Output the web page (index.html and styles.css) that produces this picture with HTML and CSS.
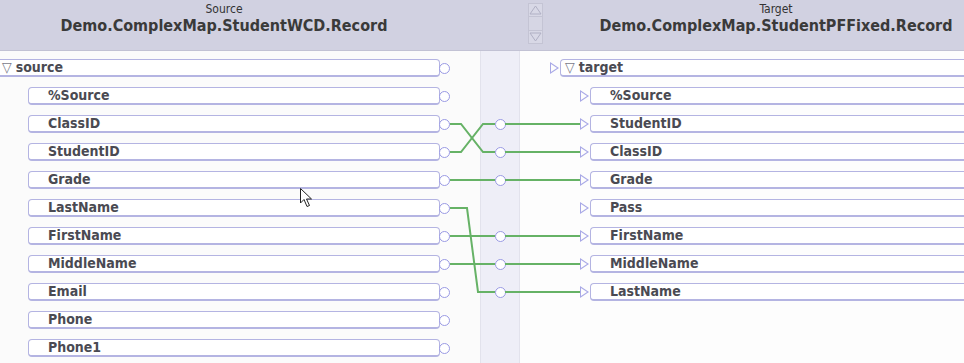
FILE: index.html
```html
<!DOCTYPE html>
<html lang="en">
<head>
    <meta charset="UTF-8">
    <title>Data Transformation Map</title>
    <link rel="stylesheet" href="styles.css">
</head>
<body>
    <div class="header">
        <div class="head-col head-source">
            <div class="head-label">Source</div>
            <div class="head-title">Demo.ComplexMap.StudentWCD.Record</div>
        </div>
        <div class="scroller">
            <svg width="15" height="41" viewBox="0 0 15 41">
                <rect x="0.5" y="13.5" width="14" height="14" fill="#d6d6e4" stroke="#c4c4d4"/>
                <rect x="0.5" y="0.5" width="14" height="13" fill="#d8d8e6" stroke="#c4c4d4"/>
                <rect x="0.5" y="27.5" width="14" height="13" fill="#d8d8e6" stroke="#c4c4d4"/>
                <polygon points="2,11 7.5,3 13,11" fill="none" stroke="#b0b0c4"/>
                <polygon points="2,30 7.5,38 13,30" fill="none" stroke="#b0b0c4"/>
            </svg>
        </div>
        <div class="head-col head-target">
            <div class="head-label">Target</div>
            <div class="head-title">Demo.ComplexMap.StudentPFFixed.Record</div>
        </div>
    </div>

    <div class="map">
        <!-- source tree -->
        <div class="pane pane-source">
            <div class="row"><div class="box root"><span class="twisty">&#9661;</span>source</div><span class="port"></span></div>
            <div class="row"><div class="box child">%Source</div><span class="port"></span></div>
            <div class="row"><div class="box child">ClassID</div><span class="port"></span></div>
            <div class="row"><div class="box child">StudentID</div><span class="port"></span></div>
            <div class="row"><div class="box child">Grade</div><span class="port"></span></div>
            <div class="row"><div class="box child">LastName</div><span class="port"></span></div>
            <div class="row"><div class="box child">FirstName</div><span class="port"></span></div>
            <div class="row"><div class="box child">MiddleName</div><span class="port"></span></div>
            <div class="row"><div class="box child">Email</div><span class="port"></span></div>
            <div class="row"><div class="box child">Phone</div><span class="port"></span></div>
            <div class="row"><div class="box child">Phone1</div><span class="port"></span></div>
        </div>

        <!-- action gutter -->
        <div class="gutter">
            <div class="row"></div>
            <div class="row"></div>
            <div class="row"><span class="port"></span></div>
            <div class="row"><span class="port"></span></div>
            <div class="row"><span class="port"></span></div>
            <div class="row"></div>
            <div class="row"><span class="port"></span></div>
            <div class="row"><span class="port"></span></div>
            <div class="row"><span class="port"></span></div>
        </div>

        <!-- target tree -->
        <div class="pane pane-target">
            <div class="row root-row"><span class="inport"></span><div class="box root"><span class="twisty">&#9661;</span>target</div></div>
            <div class="row"><span class="inport"></span><div class="box child">%Source</div></div>
            <div class="row"><span class="inport"></span><div class="box child">StudentID</div></div>
            <div class="row"><span class="inport"></span><div class="box child">ClassID</div></div>
            <div class="row"><span class="inport"></span><div class="box child">Grade</div></div>
            <div class="row"><span class="inport"></span><div class="box child">Pass</div></div>
            <div class="row"><span class="inport"></span><div class="box child">FirstName</div></div>
            <div class="row"><span class="inport"></span><div class="box child">MiddleName</div></div>
            <div class="row"><span class="inport"></span><div class="box child">LastName</div></div>
        </div>

        <!-- connections -->
        <svg class="links" width="964" height="312">
            <g fill="none" stroke="#66b266" stroke-width="2">
                <polyline points="450,73 461,73 483,101 495,101"/>
                <polyline points="450,101 461,101 483,73 495,73"/>
                <polyline points="450,129 495,129"/>
                <polyline points="450,157 467,157 478,241 495,241"/>
                <polyline points="450,185 495,185"/>
                <polyline points="450,213 495,213"/>
                <polyline points="505,73 580,73"/>
                <polyline points="505,101 580,101"/>
                <polyline points="505,129 580,129"/>
                <polyline points="505,185 580,185"/>
                <polyline points="505,213 580,213"/>
                <polyline points="505,241 580,241"/>
            </g>
        </svg>

        <svg class="cursor" width="13" height="20" viewBox="0 0 13 20">
            <polygon points="0.5,0.5 0.5,15 4,11.5 7,18.5 9.5,17.5 6.5,11 11.5,11" fill="#fff" stroke="#222"/>
        </svg>
    </div>
</body>
</html>
```

FILE: styles.css
```css
body {
    margin: 0;
    width: 964px;
    height: 363px;
    overflow: hidden;
    font-family: "DejaVu Sans Condensed", "DejaVu Sans", Verdana, sans-serif;
    font-stretch: condensed;
    background: #fbfbfb;
}
.header {
    display: flex;
    height: 50px;
    background: #d1d1e1;
    border-bottom: 1px solid #c2c2d4;
    overflow: hidden;
}
.head-col {
    flex: none;
    width: 448px;
    text-align: center;
    white-space: nowrap;
}
.head-label {
    font-size: 12px;
    color: #333;
    margin-top: 2px;
    line-height: 14px;
}
.head-title {
    font-size: 16px;
    font-weight: bold;
    color: #3a3a3a;
    line-height: 19px;
}
.scroller {
    flex: none;
    width: 24px;
    margin-left: 80px;
    padding-top: 3px;
}
.map {
    position: relative;
    display: flex;
    height: 312px;
}
.pane {
    padding-top: 2px;
}
.pane-source {
    width: 480px;
    flex: none;
    background: #fbfbfb;
}
.gutter {
    width: 38px;
    flex: none;
    padding-top: 2px;
    background: #eeeef7;
    border-left: 1px solid #e2e2ec;
    border-right: 1px solid #e2e2ec;
}
.pane-target {
    flex: 1;
    background: #fdfdfd;
    overflow: hidden;
}
.row {
    display: flex;
    align-items: center;
    height: 28px;
    padding-top: 2px;
    box-sizing: border-box;
}
.box {
    box-sizing: border-box;
    height: 18px;
    margin-bottom: 1px;
    background: #fff;
    border: 1px solid #b4b4e2;
    border-bottom-width: 2px;
    border-radius: 4px;
    font-size: 14px;
    font-weight: bold;
    color: #4a4a52;
    line-height: 15px;
    white-space: nowrap;
    display: flex;
    align-items: center;
}
.twisty {
    font-weight: normal;
    font-size: 14px;
    color: #7a7a8a;
    margin-right: 4px;
}
.pane-source .root {
    width: 440px;
    padding-left: 2px;
    border-left: none;
    border-radius: 0 4px 4px 0;
}
.pane-source .child {
    width: 412px;
    margin-left: 28px;
    padding-left: 19px;
}
.port {
    flex: none;
    box-sizing: border-box;
    width: 11px;
    height: 11px;
    border: 1px solid #9a9ae4;
    border-radius: 50%;
    background: #fff;
}
.pane-source .port {
    margin-left: -1px;
}
.gutter .port {
    margin-left: 14px;
}
.inport {
    flex: none;
    width: 0;
    height: 0;
    border-top: 6px solid transparent;
    border-bottom: 6px solid transparent;
    border-left: 9px solid #a8a8e6;
    margin-left: 60px;
    margin-right: 1px;
    position: relative;
}
.inport::after {
    content: "";
    position: absolute;
    left: -8px;
    top: -4px;
    border-top: 4px solid transparent;
    border-bottom: 4px solid transparent;
    border-left: 6px solid #fdfdfd;
}
.root-row .inport {
    margin-left: 30px;
}
.pane-target .root {
    flex: 1;
    padding-left: 4px;
    border-right: none;
    border-radius: 4px 0 0 4px;
}
.pane-target .child {
    flex: 1;
    padding-left: 19px;
    border-right: none;
    border-radius: 4px 0 0 4px;
}
.links {
    position: absolute;
    left: 0;
    top: 0;
    pointer-events: none;
}
.cursor {
    position: absolute;
    left: 300px;
    top: 137px;
}
```
